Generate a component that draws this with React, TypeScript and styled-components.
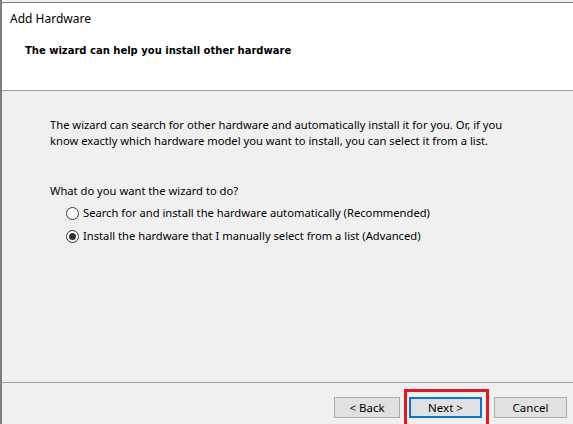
import React, { useState } from 'react';
import styled, { createGlobalStyle } from 'styled-components';

const GlobalStyle = createGlobalStyle`
  *, *::before, *::after {
    box-sizing: border-box;
  }
  html, body {
    margin: 0;
    padding: 0;
    background: #ffffff;
    overflow: hidden;
  }
  body {
    font-family: "Segoe UI", "Noto Sans", "Liberation Sans", sans-serif;
    font-size: 11.2px;
    color: #000;
  }
`;

const Window = styled.div`
  width: 573px;
  height: 424px;
  padding-top: 2px;
  border-left: 2px solid #7d7d7d;
  display: flex;
  flex-direction: column;
  background: #f0f0f0;
`;

const Header = styled.div`
  height: 89px;
  background: #ffffff;
  border-top: 1px solid #7d7d7d;
  border-bottom: 1px solid #a0a0a0;
  padding: 8px 0 0 8px;
  display: flex;
  flex-direction: column;
`;

const Title = styled.div`
  font-size: 12px;
  line-height: 16px;
`;

const Heading = styled.div`
  margin: 17px 0 0 15px;
  font-family: "DejaVu Sans", Verdana, sans-serif;
  font-weight: bold;
  font-size: 10px;
  line-height: 14px;
`;

const Body = styled.div`
  flex: 1;
  padding: 26px 0 0 48px;
  display: flex;
  flex-direction: column;
`;

const Paragraph = styled.p`
  margin: 0;
  line-height: 16px;
  white-space: nowrap;
`;

const Question = styled.div`
  margin-top: 34px;
  line-height: 16px;
`;

const Options = styled.div`
  display: flex;
  flex-direction: column;
  gap: 7px;
  margin: 6px 0 0 16px;
`;

const Option = styled.label`
  display: flex;
  align-items: center;
  gap: 4px;
  line-height: 16px;
`;

const Radio = styled.span<{ checked?: boolean }>`
  width: 13px;
  height: 13px;
  border-radius: 50%;
  border: 1px solid #333;
  background: #fff;
  display: flex;
  align-items: center;
  justify-content: center;

  &::after {
    content: '';
    width: 7px;
    height: 7px;
    border-radius: 50%;
    background: ${p => (p.checked ? '#333' : 'transparent')};
  }
`;

const Footer = styled.div`
  height: 42px;
  border-top: 1px solid #a0a0a0;
  display: flex;
  justify-content: flex-end;
  align-items: flex-start;
  padding: 14px 6px 0 0;
  gap: 12px;
`;

const ButtonGroup = styled.div`
  display: flex;
  gap: 9px;
`;

const Button = styled.button<{ focused?: boolean; w: number }>`
  position: relative;
  width: ${p => p.w}px;
  height: 21px;
  background: #e1e1e1;
  border: 1px solid ${p => (p.focused ? '#0078d7' : '#adadad')};
  box-shadow: ${p => (p.focused ? 'inset 0 0 0 1px #0078d7' : 'none')};
  font-family: inherit;
  font-size: 11.5px;
  color: #000;
  padding: 0;
  cursor: pointer;
`;

const Highlight = styled.span`
  position: absolute;
  left: -6px;
  top: -9px;
  width: 85px;
  height: 40px;
  border: 3px solid #e8141e;
  pointer-events: none;
`;

const App: React.FC = () => {
  const [choice, setChoice] = useState<'auto' | 'manual'>('manual');

  return (
    <>
      <GlobalStyle />
      <Window>
        <Header>
          <Title>Add Hardware</Title>
          <Heading>The wizard can help you install other hardware</Heading>
        </Header>
        <Body>
          <Paragraph>
            The wizard can search for other hardware and automatically install it for you. Or, if you
            <br />
            know exactly which hardware model you want to install, you can select it from a list.
          </Paragraph>
          <Question>What do you want the wizard to do?</Question>
          <Options>
            <Option onClick={() => setChoice('auto')}>
              <Radio checked={choice === 'auto'} />
              Search for and install the hardware automatically (Recommended)
            </Option>
            <Option onClick={() => setChoice('manual')}>
              <Radio checked={choice === 'manual'} />
              Install the hardware that I manually select from a list (Advanced)
            </Option>
          </Options>
        </Body>
        <Footer>
          <ButtonGroup>
            <Button w={66}>&lt; Back</Button>
            <Button w={73} focused>
              Next &gt;
              <Highlight />
            </Button>
          </ButtonGroup>
          <Button w={73}>Cancel</Button>
        </Footer>
      </Window>
    </>
  );
};

export default App;
